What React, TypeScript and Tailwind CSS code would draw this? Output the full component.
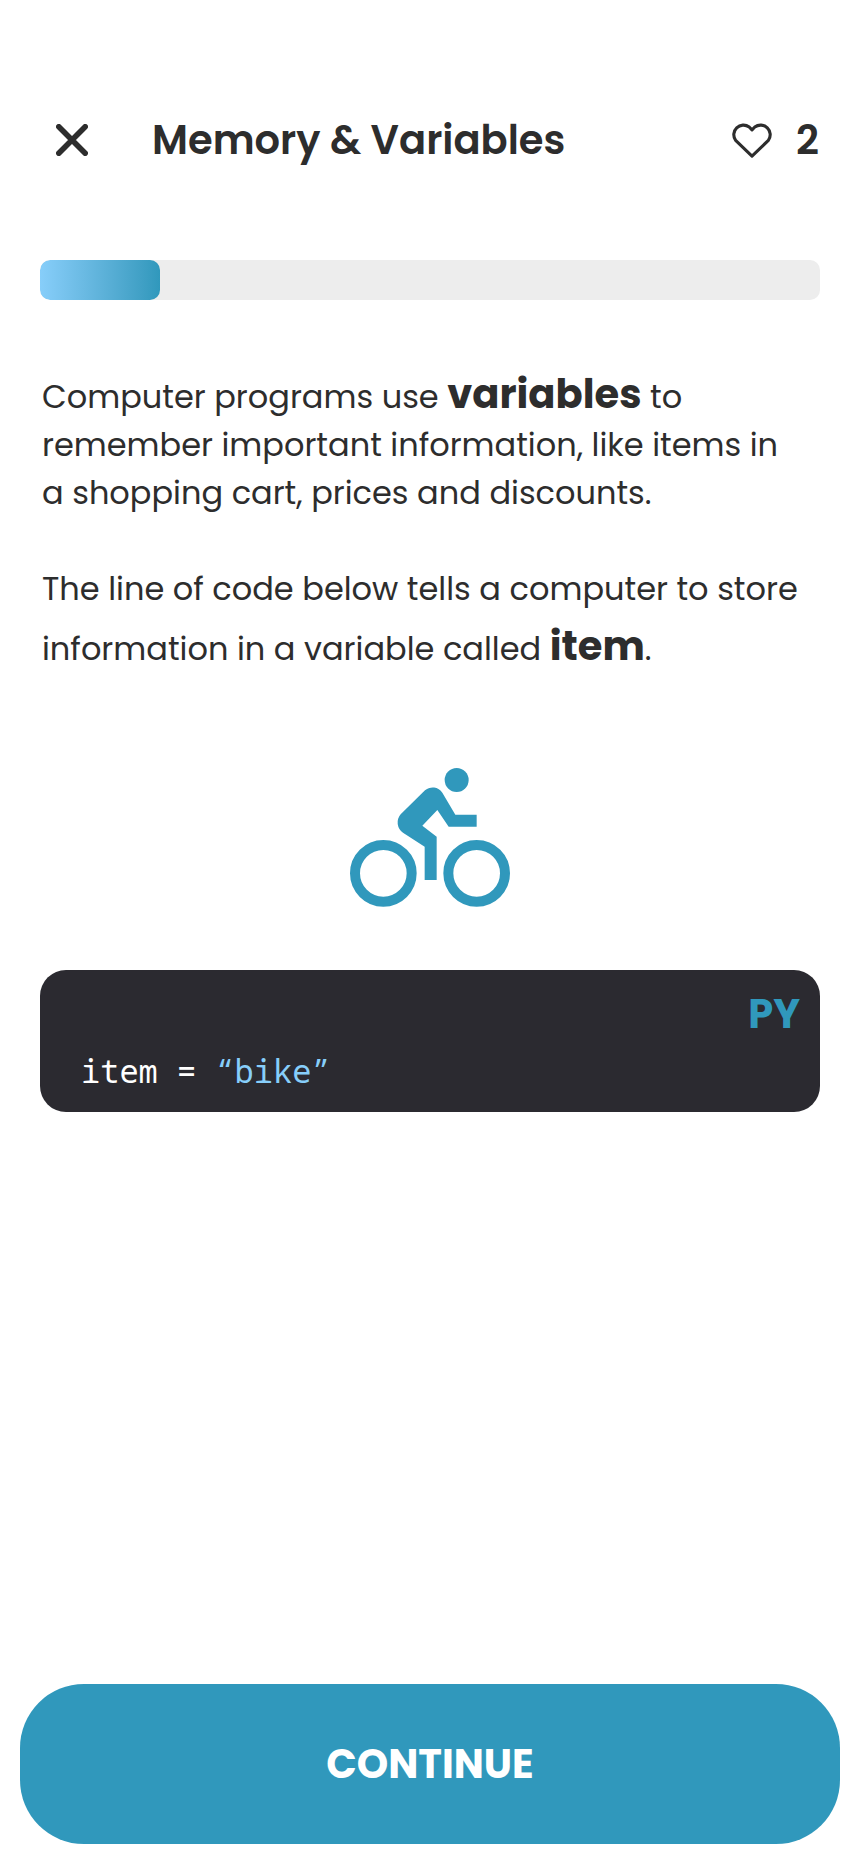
import React from "react";

const progress = 2 / 13;

function CloseIcon() {
  return (
    <svg className="size-8" viewBox="0 0 32 32" fill="none" stroke="currentColor" strokeWidth="5.6" strokeLinecap="round" aria-hidden="true">
      <path d="M2.8 2.8l26.4 26.4M29.2 2.8L2.8 29.2" />
    </svg>
  );
}

function HeartIcon() {
  return (
    <svg className="h-9 w-10" viewBox="0.7 1.6 38.6 34.7" fill="none" stroke="currentColor" strokeWidth="3" strokeLinejoin="round" strokeLinecap="round" aria-hidden="true">
      <path d="M20 9.2l-2.7-2.8A9.3 9.3 0 0 0 4.2 19.3L20 34.5 35.8 19.3A9.3 9.3 0 0 0 22.7 6.4z" />
    </svg>
  );
}

function CyclistIcon() {
  return (
    <svg className="size-40" viewBox="0 0 24 24" role="img" aria-label="Cyclist">
      <g fill="none" stroke="currentColor" strokeWidth="1.5">
        <circle cx="5" cy="17" r="4.25" />
        <circle cx="19" cy="17" r="4.25" />
      </g>
      <g fill="currentColor">
        <circle cx="16" cy="3" r="1.8" />
        <path d="M19 8.2h-3.2l-1.95-3.3a1.75 1.75 0 0 0-2.6-.35L7.6 8.15A1.85 1.85 0 0 0 7.95 10.9L11.2 13v5H13v-6.5L10.85 9.85 13.1 7.5 14.8 10H19z" />
      </g>
    </svg>
  );
}

export default function App() {
  return (
    <div className="flex min-h-screen flex-col bg-white pr-px font-[Poppins,Inter,sans-serif] text-[#2d2d2d]">
      <header className="flex items-center pt-[110px] pr-[41px] pl-10">
        <button type="button" aria-label="Close lesson" className="flex h-[60px] w-16 items-center justify-center">
          <CloseIcon />
        </button>
        <h1 className="ml-12 flex-1 text-[40px] leading-[60px] font-semibold">Memory &amp; Variables</h1>
        <div className="flex items-center gap-6" aria-label="2 lives">
          <HeartIcon />
          <span className="text-[40px] leading-[60px] font-semibold">2</span>
        </div>
      </header>

      <main className="flex flex-col px-10 pb-10">
        <div
          role="progressbar"
          aria-label="Lesson progress"
          aria-valuemin={0}
          aria-valuemax={13}
          aria-valuenow={2}
          className="mt-[90px] h-10 overflow-hidden rounded-[10px] bg-[#ededed]"
        >
          <div
            className="h-full rounded-[10px] bg-linear-to-r from-[#87cefa] to-[#3098bc]"
            style={{ width: `${progress * 100}%` }}
          />
        </div>

        <div className="mt-[70px] flex flex-col gap-12 pl-[2px] text-[32px] leading-[48px]">
          <p>
            Computer programs use <strong className="text-[40px] leading-[48px] font-bold">variables</strong> to
            <br />
            remember important information, like items in
            <br />a shopping cart, prices and discounts.
          </p>
          <p>
            The line of code below tells a computer to store
            <br />
            information in a variable called <strong className="text-[40px] leading-[66px] font-bold">item</strong>.
          </p>
        </div>

        <div className="mt-[81px] flex justify-center text-[#3098bc]">
          <CyclistIcon />
        </div>

        <section aria-label="Python code" className="mt-[50px] flex flex-col rounded-[26px] bg-[#2b2a30] px-5 pt-[14px] pb-[14px]">
          <span className="self-end text-[40px] leading-[60px] font-bold text-[#3098bc]">PY</span>
          <pre className="pl-[21px] font-['Noto_Sans_Mono','Liberation_Mono',monospace] text-[32px] leading-[54px] text-white">
            <code className="font-['Noto_Sans_Mono','Liberation_Mono',monospace]">
              item = <span className="text-[#87cefa]">“bike”</span>
            </code>
          </pre>
        </section>
      </main>

      <footer className="mt-auto p-5">
        <button type="button" className="h-40 w-full rounded-[64px] bg-[#3098bc] text-[40px] font-bold text-white">
          CONTINUE
        </button>
      </footer>
    </div>
  );
}
